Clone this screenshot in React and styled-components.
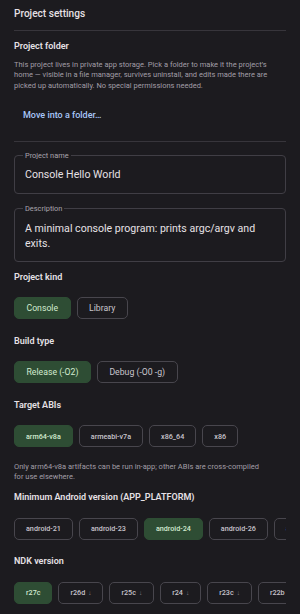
import React from 'react';
import styled, { createGlobalStyle } from 'styled-components';

const GlobalStyle = createGlobalStyle`
    html, body {
        margin: 0;
        padding: 0;
        background: #1c1b1f;
        height: 614px;
        overflow: hidden;
    }
    * {
        box-sizing: border-box;
    }
`;

const Page = styled.div`
    display: flex;
    flex-direction: column;
    padding: 7px 14px 0;
    font-family: Roboto, 'Noto Sans', sans-serif;
    color: #e6e1e5;
`;

const Title = styled.h1`
    margin: 0;
    font-size: 10.1px;
    font-weight: 500;
    line-height: 14px;
`;

const Divider = styled.div`
    height: 1px;
    background: #37353b;
    margin: ${(p) => p.$margin || '9px 0'};
`;

const SectionLabel = styled.h2`
    margin: ${(p) => p.$top || 0}px 0 ${(p) => p.$bottom || 0}px;
    font-size: 9px;
    font-weight: 600;
    line-height: 12px;
    color: #e6e1e5;
`;

const Hint = styled.p`
    margin: ${(p) => p.$top || 0}px 0 0;
    font-size: 7.5px;
    line-height: 10.6px;
    color: #a29ea7;
`;

const LinkButton = styled.button`
    align-self: flex-start;
    margin-top: 10px;
    padding: 8px 9px;
    border: none;
    background: none;
    font-family: inherit;
    font-size: 9px;
    font-weight: 500;
    line-height: 12px;
    color: #a8c7fa;
`;

const Field = styled.fieldset`
    margin: ${(p) => p.$top}px 0 0;
    padding: 8px 10px ${(p) => p.$bottom}px;
    border: 1px solid #403e45;
    border-radius: 4px;
    min-width: 0;
`;

const FieldLabel = styled.legend`
    margin-left: -2px;
    padding: 0 2px;
    font-size: 7.4px;
    line-height: 8px;
    color: #a9a5ad;
`;

const FieldValue = styled.div`
    font-size: 10.6px;
    line-height: ${(p) => p.$lh || 14}px;
    color: #e6e1e5;
`;

const ChipRow = styled.div`
    display: flex;
    gap: 6px;
    width: 100%;
    overflow: hidden;
    margin-bottom: ${(p) => p.$bottom || 0}px;
`;

const Chip = styled.div`
    flex-shrink: 0;
    display: flex;
    align-items: center;
    height: 22px;
    padding: 0 ${(p) => (p.$small ? 11 : 11.5)}px;
    border-radius: 5px;
    border: 1px solid ${(p) => (p.$active ? '#2e4d34' : '#48464d')};
    background: ${(p) => (p.$active ? '#2e4d34' : 'transparent')};
    color: ${(p) => (p.$active ? '#d2ebd0' : '#c9c5cd')};
    font-size: ${(p) => (p.$small ? 7.2 : 8.7)}px;
    font-weight: ${(p) => (p.$small ? 500 : 400)};
    white-space: nowrap;
`;

const Download = styled.span`
    margin-left: 3px;
    font-size: 6.5px;
    color: #7f7b84;
`;

const ndk = [
    { name: 'r27c', installed: true },
    { name: 'r26d' },
    { name: 'r25c' },
    { name: 'r24' },
    { name: 'r23c' },
    { name: 'r22b' },
];

export default function App() {
    return (
        <>
            <GlobalStyle />
            <Page>
                <Title>Project settings</Title>
                <Divider />

                <SectionLabel>Project folder</SectionLabel>
                <Hint $top={7.5}>
                    This project lives in private app storage. Pick a folder to make it the project’s
                    home — visible in a file manager, survives uninstall, and edits made there are
                    picked up automatically. No special permissions needed.
                </Hint>
                <LinkButton>Move into a folder…</LinkButton>
                <Divider $margin='12px 0 0' />

                <Field $top={9.5} $bottom={11.5}>
                    <FieldLabel>Project name</FieldLabel>
                    <FieldValue>Console Hello World</FieldValue>
                </Field>
                <Field $top={10.5} $bottom={10}>
                    <FieldLabel>Description</FieldLabel>
                    <FieldValue $lh={15}>
                        A minimal console program: prints argc/argv and exits.
                    </FieldValue>
                </Field>

                <SectionLabel $top={9} $bottom={14.5}>Project kind</SectionLabel>
                <ChipRow $bottom={15.5}>
                    <Chip $active>Console</Chip>
                    <Chip>Library</Chip>
                </ChipRow>

                <SectionLabel $bottom={14.5}>Build type</SectionLabel>
                <ChipRow $bottom={15.5}>
                    <Chip $active>Release (-O2)</Chip>
                    <Chip>Debug (-O0 -g)</Chip>
                </ChipRow>

                <SectionLabel $bottom={14.5}>Target ABIs</SectionLabel>
                <ChipRow>
                    <Chip $small $active>arm64-v8a</Chip>
                    <Chip $small>armeabi-v7a</Chip>
                    <Chip $small>x86_64</Chip>
                    <Chip $small>x86</Chip>
                </ChipRow>
                <Hint $top={14.5}>
                    Only arm64-v8a artifacts can be run in-app; other ABIs are cross-compiled
                    <br />
                    for use elsewhere.
                </Hint>

                <SectionLabel $top={8.5} $bottom={14.5}>
                    Minimum Android version (APP_PLATFORM)
                </SectionLabel>
                <ChipRow $bottom={15.5}>
                    {['21', '23', '24', '26', '28'].map((v) => (
                        <Chip key={v} $small $active={v === '24'}>
                            android-{v}
                        </Chip>
                    ))}
                </ChipRow>

                <SectionLabel $bottom={14.5}>NDK version</SectionLabel>
                <ChipRow>
                    {ndk.map((item) => (
                        <Chip key={item.name} $small $active={item.installed}>
                            {item.name}
                            {!item.installed && <Download>↓</Download>}
                        </Chip>
                    ))}
                </ChipRow>
            </Page>
        </>
    );
}
